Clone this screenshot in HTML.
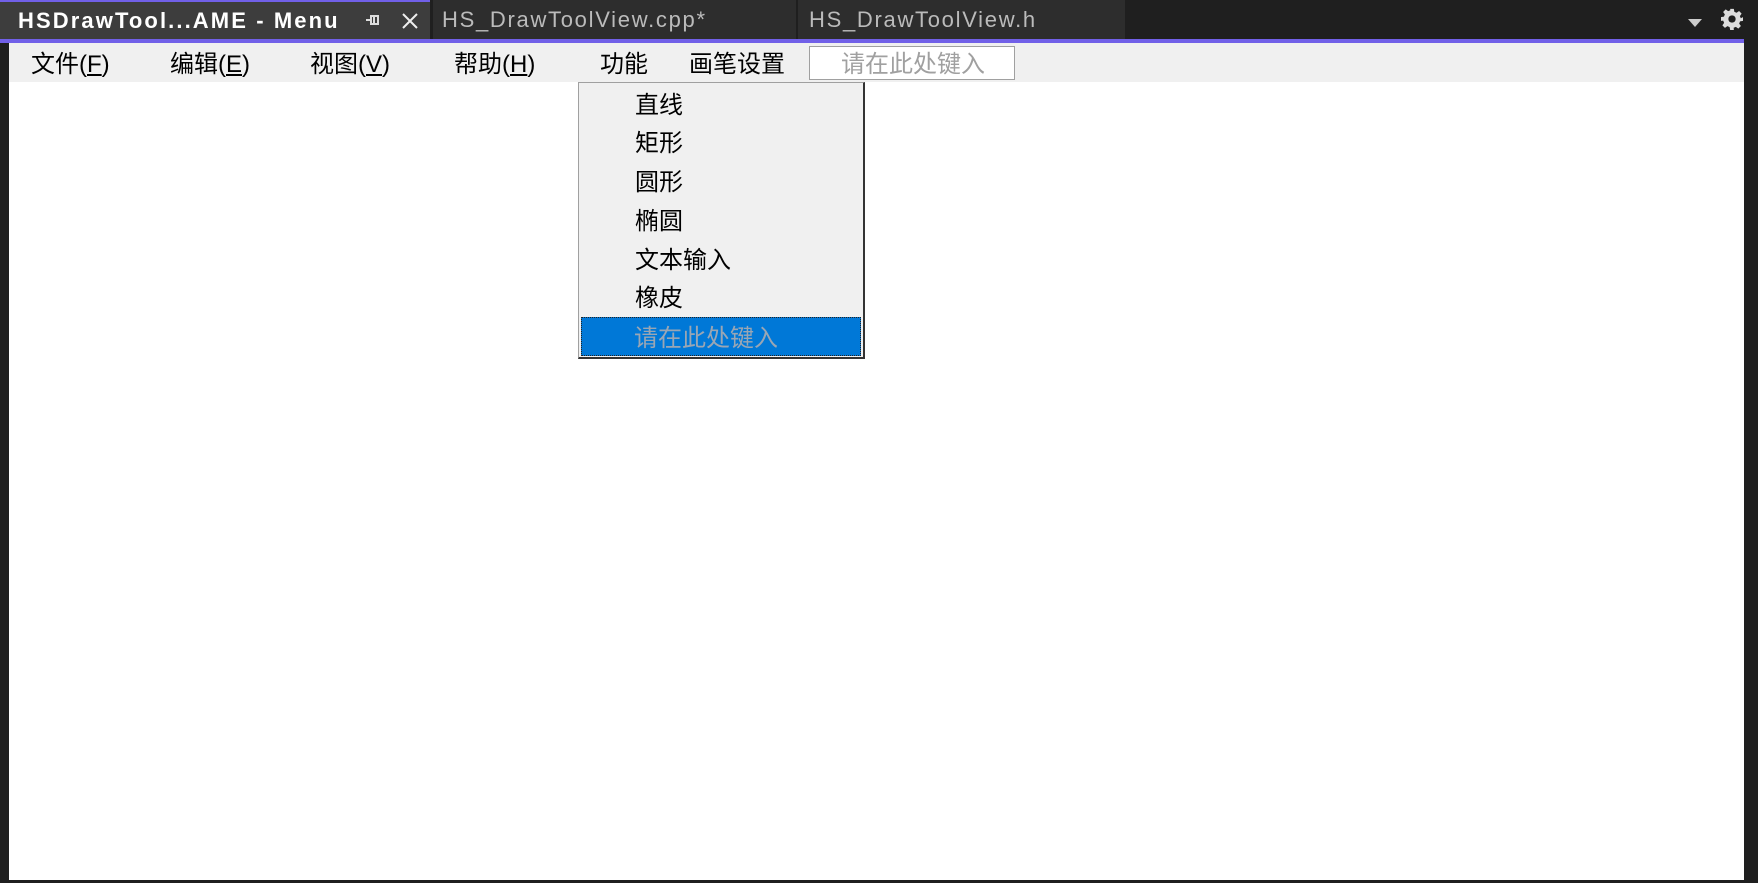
<!DOCTYPE html>
<html><head><meta charset="utf-8"><style>
*{margin:0;padding:0;box-sizing:border-box}
body{width:1758px;height:883px;background:#1f1f1f;position:relative;overflow:hidden;font-family:"Liberation Sans","Noto Sans CJK SC","Microsoft YaHei",sans-serif}
.a{position:absolute}
.tab{position:absolute;top:0;height:39px;line-height:40px;font-size:22px;white-space:nowrap;letter-spacing:1.7px}
.mi{position:absolute;top:45px;height:39px;line-height:40px;font-size:24px;color:#000}
.dd{position:absolute;left:635px;font-size:24px;color:#000;line-height:42px;height:39px}
u{text-decoration:underline}
</style></head><body>
<div class="tab" style="left:0;width:430px;background:#3d3d3d;border-top:2px solid #7160e8;color:#fff;font-weight:bold;padding-left:18px;line-height:37px;letter-spacing:2.1px">HSDrawTool...AME - Menu</div>
<svg class="a" style="left:364px;top:11px" width="18" height="18" viewBox="0 0 18 18"><path d="M2 9h5M7 4v10M7 5h7v8H7M10 5v8" stroke="#ddd" stroke-width="2" fill="none"/></svg>
<svg class="a" style="left:401px;top:12px" width="18" height="18" viewBox="0 0 18 18"><path d="M2 2L16 16M16 2L2 16" stroke="#eee" stroke-width="2"/></svg>
<div class="tab" style="left:433px;width:363px;background:#2d2d2d;color:#bbb;padding-left:9px">HS_DrawToolView.cpp*</div>
<div class="tab" style="left:798px;width:327px;background:#2d2d2d;color:#bbb;padding-left:11px">HS_DrawToolView.h</div>
<svg class="a" style="left:1686px;top:16px" width="18" height="12"><path d="M2 3h14L9 11z" fill="#ccc"/></svg>
<svg class="a" style="left:1721px;top:8px" width="22" height="22" viewBox="0 0 24 24"><path fill="#ddd" d="M10 1h4l.6 3.2 2.4 1 2.7-1.9 2.8 2.8-1.9 2.7 1 2.4L24 10v4l-3.2.6-1 2.4 1.9 2.7-2.8 2.8-2.7-1.9-2.4 1L14 24h-4l-.6-3.2-2.4-1-2.7 1.9-2.8-2.8 1.9-2.7-1-2.4L0 14v-4l3.2-.6 1-2.4-1.9-2.7 2.8-2.8 2.7 1.9 2.4-1z"/><circle cx="12" cy="12" r="4" fill="#1f1f1f"/></svg>
<div class="a" style="left:0;top:39px;width:1744px;height:4px;background:#7160e8"></div>
<div class="a" style="left:9px;top:43px;width:1735px;height:837px;background:#fff"></div>
<div class="a" style="left:9px;top:43px;width:1735px;height:39px;background:#f0f0f0"></div>
<div class="mi" style="left:31px">文件(<u>F</u>)</div>
<div class="mi" style="left:170px">编辑(<u>E</u>)</div>
<div class="mi" style="left:310px">视图(<u>V</u>)</div>
<div class="mi" style="left:454px">帮助(<u>H</u>)</div>
<div class="mi" style="left:600px">功能</div>
<div class="mi" style="left:689px">画笔设置</div>
<div class="a" style="left:809px;top:46px;width:206px;height:34px;background:#fff;border:1px solid #a0a0a0;color:#a0a0a0;font-size:24px;line-height:35px;padding-left:31px">请在此处键入</div>
<div class="a" style="left:578px;top:82px;width:287px;height:277px;background:#f0f0f0;border:1px solid #a0a0a0;border-right:2px solid #333;border-bottom:2px solid #333"></div>
<div class="dd" style="top:85px">直线</div>
<div class="dd" style="top:123px">矩形</div>
<div class="dd" style="top:162px">圆形</div>
<div class="dd" style="top:201px">椭圆</div>
<div class="dd" style="top:240px">文本输入</div>
<div class="dd" style="top:278px">橡皮</div>
<div class="a" style="left:581px;top:317px;width:280px;height:39px;background:#0078d7;border:1px dotted #222"></div>
<div class="dd" style="top:318px;left:634px;color:#9aa6b4">请在此处键入</div>
</body></html>
